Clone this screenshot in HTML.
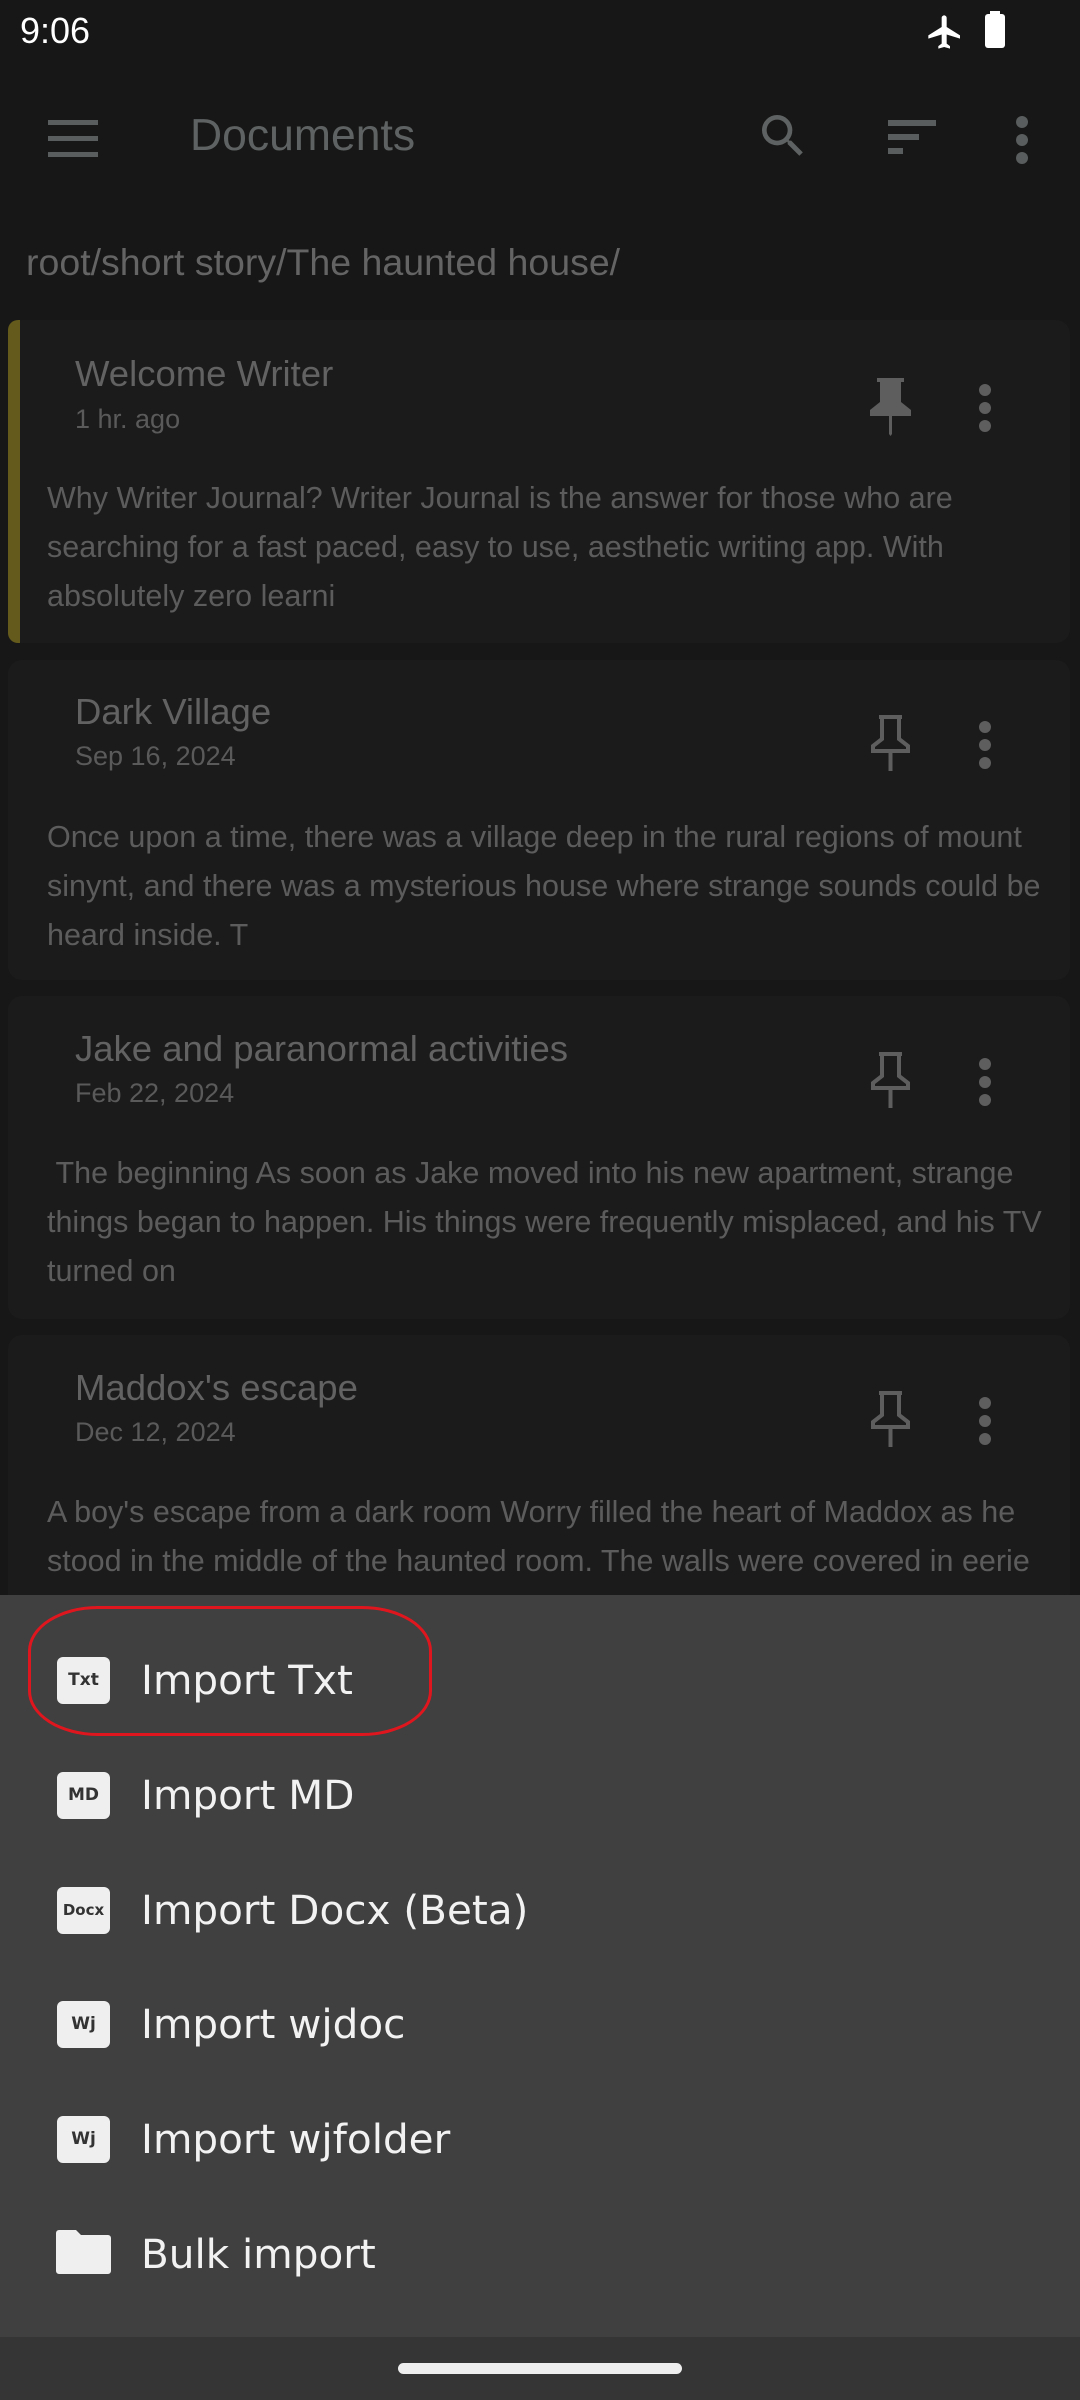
<!DOCTYPE html>
<html><head><meta charset="utf-8"><style>
*{margin:0;padding:0;box-sizing:border-box}
body{width:1080px;height:2400px;background:#171717;position:relative;overflow:hidden;font-family:"Liberation Sans",sans-serif}
.a{position:absolute;white-space:nowrap}
.card{position:absolute;left:8px;width:1062px;background:#1b1b1b;border-radius:14px}
.t{position:absolute;left:67px;font-size:36.5px;color:#626262;white-space:nowrap}
.d{position:absolute;left:67px;font-size:27px;color:#5a5a5a;white-space:nowrap}
.b{position:absolute;left:39px;font-size:30.5px;color:#5c5c5c;line-height:49px;white-space:nowrap}
.pin{position:absolute;left:862px;width:41px;height:58px}
.dots{position:absolute;left:971px;width:12px}
.dots i{display:block;width:12px;height:12px;border-radius:50%;background:#5e5e5e;margin-bottom:6px}
.sheet{position:absolute;left:0;top:1595px;width:1080px;height:742px;background:#404040}
.it{position:absolute;left:0;width:1080px;height:100px}
.ic{position:absolute;left:57px;width:53px;height:47px;background:#efefef;border-radius:6px;font-family:"DejaVu Sans",sans-serif;font-size:17px;color:#333;text-align:center;line-height:47px;font-weight:bold}
.lb{position:absolute;left:141px;font-family:"DejaVu Sans",sans-serif;font-size:40.5px;color:#f2f2f2;white-space:nowrap}
</style></head><body>
<div class="a" style="left:20px;top:10px;font-size:36px;color:#fff">9:06</div>
<svg class="a" style="left:925px;top:12px" width="40" height="40" viewBox="0 0 24 24"><path fill="#fff" d="M21 16v-2l-8-5V3.5C13 2.7 12.3 2 11.5 2S10 2.7 10 3.5V9l-8 5v2l8-2.5V19l-2 1.5V22l3.5-1 3.5 1v-1.5L13 19v-5.5z"/></svg>
<div class="a" style="left:985px;top:14px;width:20px;height:34px;background:#fff;border-radius:3px"></div>
<div class="a" style="left:990px;top:11px;width:10px;height:4px;background:#fff"></div>

<div class="a" style="left:48px;top:120px;width:50px;height:5px;background:#5a5d5d;box-shadow:0 16px 0 #5a5d5d,0 32px 0 #5a5d5d"></div>
<div class="a" style="left:190px;top:111px;font-size:44.5px;color:#5f6262">Documents</div>
<svg class="a" style="left:755px;top:108px" width="56" height="56" viewBox="0 0 24 24"><path fill="#5f6262" d="M15.5 14h-.79l-.28-.27A6.47 6.47 0 0 0 16 9.5 6.5 6.5 0 1 0 9.5 16c1.61 0 3.09-.59 4.23-1.57l.27.28v.79l5 4.99L20.490 19zm-6 0C7.01 14 5 11.99 5 9.5S7.01 5 9.5 5 14 7.01 14 9.5 11.99 14 9.5 14"/></svg>
<div class="a" style="left:888px;top:120px;width:48px;height:6px;background:#5a5d5d"></div>
<div class="a" style="left:888px;top:134px;width:31px;height:6px;background:#5a5d5d"></div>
<div class="a" style="left:888px;top:148px;width:15px;height:6px;background:#5a5d5d"></div>
<div class="dots" style="left:1016px;top:116px"><i style="background:#5a5d5d"></i><i style="background:#5a5d5d"></i><i style="background:#5a5d5d"></i></div>
<div class="a" style="left:26px;top:241px;font-size:37.5px;color:#646464">root/short story/The haunted house/</div>

<div class="card" style="top:320px;height:323px">
<div style="position:absolute;left:0;top:0;width:12px;height:323px;background:#645a1c;border-radius:10px 0 0 10px"></div>
<div class="t" style="top:33px">Welcome Writer</div>
<div class="d" style="top:84px">1 hr. ago</div>
<svg class="pin" style="top:58px" viewBox="0 0 41 58"><path fill="#5e5e5e" d="M7 0h27v4h-3v20l10 8v6H22v18l-1.5 2-1.5-2V38H0v-6l10-8V4H7z"/></svg>
<div class="dots" style="top:64px"><i></i><i></i><i></i></div>
<div class="b" style="top:154px">Why Writer Journal? Writer Journal is the answer for those who are<br>searching for a fast paced, easy to use, aesthetic writing app. With<br>absolutely zero learni</div>
</div>

<div class="card" style="top:660px;height:320px">
<div class="t" style="top:31px">Dark Village</div>
<div class="d" style="top:81px">Sep 16, 2024</div>
<svg class="pin" style="top:55px" viewBox="0 0 41 58"><path fill="none" stroke="#5e5e5e" stroke-width="4" d="M9 2h23M12 2v22L3 31v5h35v-5l-9-7V2M20.5 38v18"/></svg>
<div class="dots" style="top:61px"><i></i><i></i><i></i></div>
<div class="b" style="top:153px">Once upon a time, there was a village deep in the rural regions of mount<br>sinynt, and there was a mysterious house where strange sounds could be<br>heard inside. T</div>
</div>

<div class="card" style="top:996px;height:323px">
<div class="t" style="top:32px">Jake and paranormal activities</div>
<div class="d" style="top:82px">Feb 22, 2024</div>
<svg class="pin" style="top:56px" viewBox="0 0 41 58"><path fill="none" stroke="#5e5e5e" stroke-width="4" d="M9 2h23M12 2v22L3 31v5h35v-5l-9-7V2M20.5 38v18"/></svg>
<div class="dots" style="top:62px"><i></i><i></i><i></i></div>
<div class="b" style="top:153px">&nbsp;The beginning As soon as Jake moved into his new apartment, strange<br>things began to happen. His things were frequently misplaced, and his TV<br>turned on</div>
</div>

<div class="card" style="top:1335px;height:300px">
<div class="t" style="top:32px">Maddox's escape</div>
<div class="d" style="top:82px">Dec 12, 2024</div>
<svg class="pin" style="top:56px" viewBox="0 0 41 58"><path fill="none" stroke="#5e5e5e" stroke-width="4" d="M9 2h23M12 2v22L3 31v5h35v-5l-9-7V2M20.5 38v18"/></svg>
<div class="dots" style="top:62px"><i></i><i></i><i></i></div>
<div class="b" style="top:153px">A boy's escape from a dark room Worry filled the heart of Maddox as he<br>stood in the middle of the haunted room. The walls were covered in eerie</div>
</div>

<div class="sheet">
<div class="it" style="top:33px"><div class="ic" style="top:29px">Txt</div><div class="lb" style="top:28px">Import Txt</div></div>
<div class="it" style="top:148px"><div class="ic" style="top:29px">MD</div><div class="lb" style="top:28px">Import MD</div></div>
<div class="it" style="top:263px"><div class="ic" style="top:29px;font-size:15px">Docx</div><div class="lb" style="top:28px">Import Docx (Beta)</div></div>
<div class="it" style="top:377px"><div class="ic" style="top:29px">Wj</div><div class="lb" style="top:28px">Import wjdoc</div></div>
<div class="it" style="top:492px"><div class="ic" style="top:29px">Wj</div><div class="lb" style="top:28px">Import wjfolder</div></div>
<div class="it" style="top:607px">
<svg style="position:absolute;left:56px;top:28px" width="55" height="44" viewBox="0 0 55 44"><path fill="#efefef" d="M3 0h17l5 5h27a3 3 0 0 1 3 3v33a3 3 0 0 1-3 3H3a3 3 0 0 1-3-3V3a3 3 0 0 1 3-3z"/></svg>
<div class="lb" style="top:28px">Bulk import</div></div>
<div style="position:absolute;left:28px;top:11px;width:404px;height:130px;border:3px solid #e0161e;border-radius:70px / 45px"></div>
</div>
<div class="a" style="left:0;top:2337px;width:1080px;height:63px;background:#353535"></div>
<div class="a" style="left:398px;top:2363px;width:284px;height:11px;background:#eee;border-radius:6px"></div>
</body></html>
